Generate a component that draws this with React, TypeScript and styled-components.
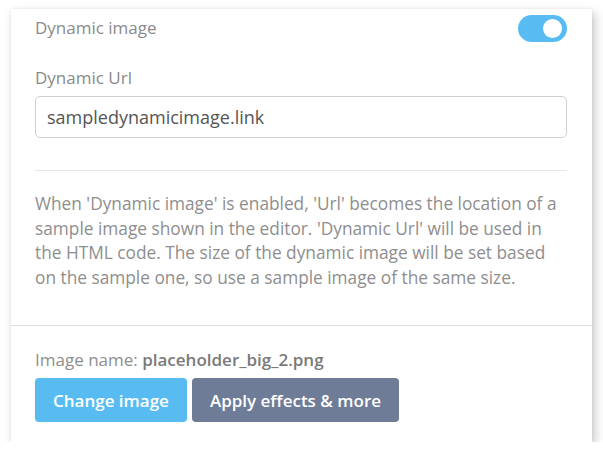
import React, { useState } from "react";
import styled, { createGlobalStyle } from "styled-components";

const GlobalStyle = createGlobalStyle`
    body {
        margin: 0;
        background: #fff;
        font-family: "Open Sans", "Noto Sans", sans-serif;
    }
`;

const Page = styled.div`
    padding: 9px 11px 0 11px;
`;

const Card = styled.div`
    width: 581px;
    background: #fff;
    box-shadow: 3px 4px 10px rgba(0, 0, 0, 0.22), 0 0 3px rgba(0, 0, 0, 0.06);
`;

const TopSection = styled.div`
    padding: 5px 25px 35px 24px;
    border-bottom: 1px solid #dedede;
`;

const Row = styled.div`
    display: flex;
    justify-content: space-between;
    align-items: center;
    height: 28px;
`;

const Label = styled.div`
    font-size: 17px;
    line-height: 24px;
    color: #8a8a8a;
`;

const FieldLabel = styled(Label)`
    margin-top: 24px;
`;

const Toggle = styled.button<{ on: boolean }>`
    position: relative;
    width: 49px;
    height: 27px;
    border: none;
    padding: 0;
    border-radius: 14px;
    background: ${(p) => (p.on ? "#58bcf2" : "#cfd5dd")};
    cursor: pointer;

    &::after {
        content: "";
        position: absolute;
        top: 4px;
        left: ${(p) => (p.on ? "25px" : "4px")};
        width: 19px;
        height: 19px;
        border-radius: 50%;
        background: #fff;
    }
`;

const Input = styled.input`
    display: block;
    box-sizing: border-box;
    width: 100%;
    height: 42px;
    margin-top: 6px;
    padding: 0 11px;
    border: 1px solid #cfcfcf;
    border-radius: 5px;
    font-family: inherit;
    font-size: 18px;
    color: #555;
    outline: none;
`;

const Divider = styled.hr`
    margin: 32px 0 0 0;
    border: none;
    border-top: 1px solid #e6e6e6;
`;

const Help = styled.p`
    margin: 21px 6px 0 0;
    font-size: 17.3px;
    line-height: 24.5px;
    color: #8e8e8e;
`;

const BottomSection = styled.div`
    padding: 22px 24px 20px 24px;
`;

const FileName = styled.div`
    font-size: 17px;
    line-height: 24px;
    color: #8e8e8e;

    b {
        font-weight: 600;
        color: #7a7a7a;
    }
`;

const Buttons = styled.div`
    display: flex;
    gap: 5px;
    margin-top: 6px;
`;

const Button = styled.button<{ variant: "primary" | "secondary" }>`
    height: 44px;
    padding: 0 18px;
    border: none;
    border-radius: 4px;
    background: ${(p) => (p.variant === "primary" ? "#58bcf2" : "#6e7c98")};
    color: #fff;
    font-family: inherit;
    font-size: 17px;
    font-weight: 600;
    cursor: pointer;
`;

const App = () => {
    const [dynamic, setDynamic] = useState(true);
    const [url, setUrl] = useState("sampledynamicimage.link");

    return (
        <Page>
            <GlobalStyle />
            <Card>
                <TopSection>
                    <Row>
                        <Label>Dynamic image</Label>
                        <Toggle on={dynamic} onClick={() => setDynamic(!dynamic)} />
                    </Row>
                    <FieldLabel>Dynamic Url</FieldLabel>
                    <Input value={url} onChange={(e) => setUrl(e.target.value)} />
                    <Divider />
                    <Help>
                        When 'Dynamic image' is enabled, 'Url' becomes the location of a sample image
                        shown in the editor. 'Dynamic Url' will be used in the HTML code. The size of the
                        dynamic image will be set based on the sample one, so use a sample image of the
                        same size.
                    </Help>
                </TopSection>
                <BottomSection>
                    <FileName>
                        Image name: <b>placeholder_big_2.png</b>
                    </FileName>
                    <Buttons>
                        <Button variant="primary">Change image</Button>
                        <Button variant="secondary">Apply effects &amp; more</Button>
                    </Buttons>
                </BottomSection>
            </Card>
        </Page>
    );
};

export default App;
